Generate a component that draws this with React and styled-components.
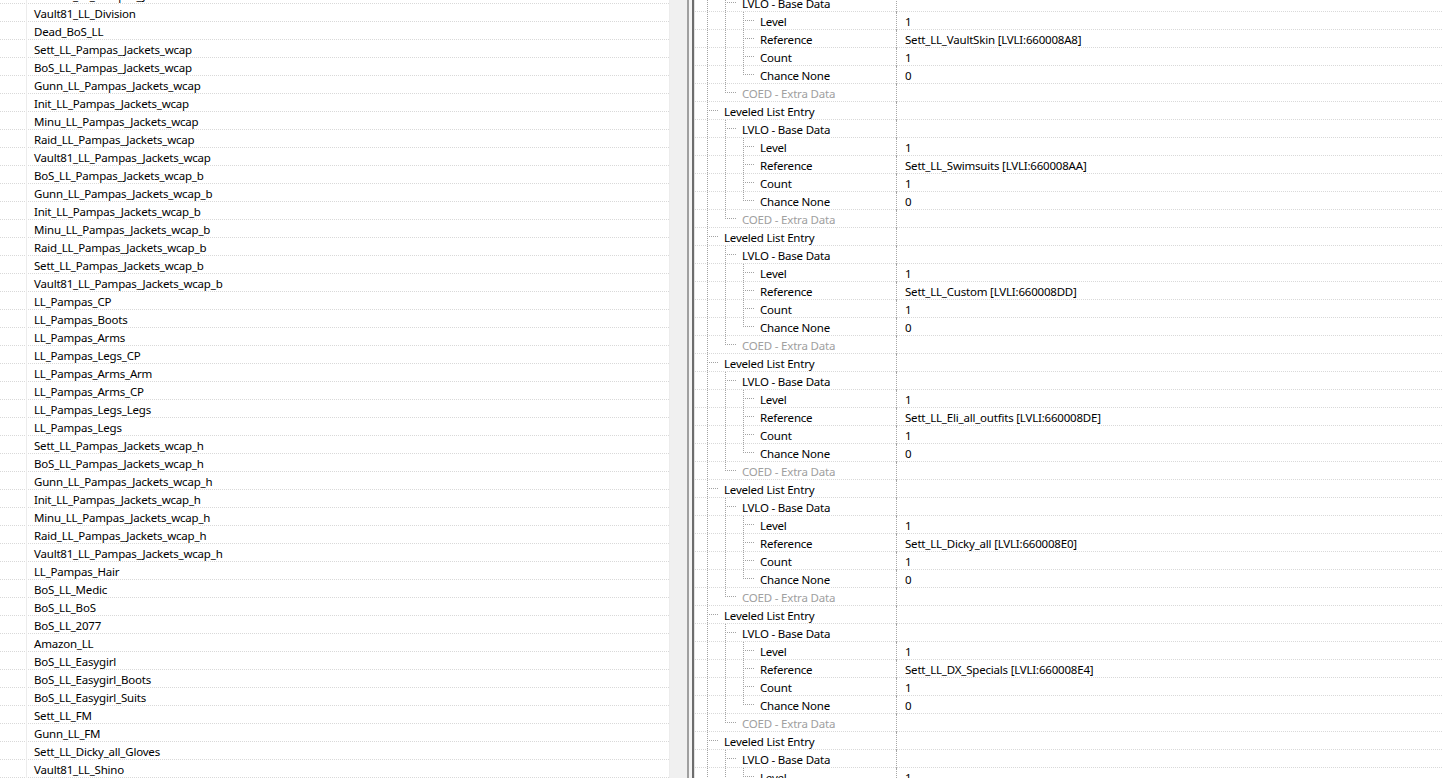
import React from "react";
import styled, { createGlobalStyle } from "styled-components";

const GlobalStyle = createGlobalStyle`
  html, body {
    margin: 0;
    padding: 0;
    background: #ffffff;
  }
  body {
    font-family: "Noto Sans", "Open Sans", sans-serif;
    font-size: 11.5px;
    letter-spacing: -0.2px;
    color: #000;
  }
`;

const Window = styled.div`
  display: flex;
  width: 100vw;
  height: 100vh;
  overflow: hidden;
  background: #fff;
`;

const ListPane = styled.div`
  width: 669px;
  flex: none;
  overflow: hidden;
  background: #fff;
  border-right: 1px solid #ececec;
`;

const ListBody = styled.div`
  margin-top: -14px;
`;

const Gutter = styled.div`
  width: 17px;
  flex: none;
  background: #f0f0f0;
`;

const Splitter = styled.div`
  width: 8px;
  flex: none;
  display: flex;
  background: #f0f0f0;
`;

const SplitLine = styled.div`
  width: ${(p) => p.$w}px;
  background: ${(p) => p.$color};
`;

const TreePane = styled.div`
  flex: 1;
  overflow: hidden;
  background: #fff;
`;

const TreeBody = styled.div`
  margin-top: -24px;
`;

const gridLine = `
  background-image: linear-gradient(to right, #d9d9d9 50%, transparent 50%);
  background-size: 2px 1px;
  background-repeat: repeat-x;
  background-position: left bottom;
`;

const ListRow = styled.div`
  display: flex;
  height: 18px;
  box-sizing: border-box;
  ${gridLine}
`;

const MarkCell = styled.div`
  width: 26px;
  flex: none;
  border-right: 1px solid #ececec;
`;

const NameCell = styled.div`
  padding: 1px 0 0 7px;
  line-height: 17px;
  white-space: nowrap;
`;

const TreeRow = styled.div`
  display: flex;
  height: 18px;
  box-sizing: border-box;
  ${gridLine}
`;

const TreeCell = styled.div`
  width: 202px;
  flex: none;
  display: flex;
  padding-left: 3px;
  box-sizing: border-box;
  border-right: 1px dotted #a6a6a6;
  overflow: hidden;
`;

const dots = "#a3a3a3";

const Guide = styled.div`
  width: 18px;
  height: 18px;
  flex: none;
  position: relative;

  &::before {
    content: "";
    display: ${(p) => (p.$line === "none" ? "none" : "block")};
    position: absolute;
    left: 9px;
    top: 0;
    width: 1px;
    height: ${(p) => (p.$line === "top" ? "9px" : "18px")};
    background-image: linear-gradient(to bottom, ${dots} 50%, transparent 50%);
    background-size: 1px 2px;
  }

  &::after {
    content: "";
    display: ${(p) => (p.$branch ? "block" : "none")};
    position: absolute;
    left: 11px;
    top: 8px;
    width: 9px;
    height: 1px;
    background-image: linear-gradient(to right, ${dots} 50%, transparent 50%);
    background-size: 2px 1px;
  }
`;

const Label = styled.div`
  padding: 1px 0 0 8px;
  line-height: 17px;
  white-space: nowrap;
  color: ${(p) => (p.$muted ? "#a0a0a0" : "#000")};
`;

const ValueCell = styled.div`
  padding: 1px 0 0 8px;
  line-height: 17px;
  white-space: nowrap;
`;

const names = [
  "Vault81_LL_Pampas_Jeans",
  "Vault81_LL_Division",
  "Dead_BoS_LL",
  "Sett_LL_Pampas_Jackets_wcap",
  "BoS_LL_Pampas_Jackets_wcap",
  "Gunn_LL_Pampas_Jackets_wcap",
  "Init_LL_Pampas_Jackets_wcap",
  "Minu_LL_Pampas_Jackets_wcap",
  "Raid_LL_Pampas_Jackets_wcap",
  "Vault81_LL_Pampas_Jackets_wcap",
  "BoS_LL_Pampas_Jackets_wcap_b",
  "Gunn_LL_Pampas_Jackets_wcap_b",
  "Init_LL_Pampas_Jackets_wcap_b",
  "Minu_LL_Pampas_Jackets_wcap_b",
  "Raid_LL_Pampas_Jackets_wcap_b",
  "Sett_LL_Pampas_Jackets_wcap_b",
  "Vault81_LL_Pampas_Jackets_wcap_b",
  "LL_Pampas_CP",
  "LL_Pampas_Boots",
  "LL_Pampas_Arms",
  "LL_Pampas_Legs_CP",
  "LL_Pampas_Arms_Arm",
  "LL_Pampas_Arms_CP",
  "LL_Pampas_Legs_Legs",
  "LL_Pampas_Legs",
  "Sett_LL_Pampas_Jackets_wcap_h",
  "BoS_LL_Pampas_Jackets_wcap_h",
  "Gunn_LL_Pampas_Jackets_wcap_h",
  "Init_LL_Pampas_Jackets_wcap_h",
  "Minu_LL_Pampas_Jackets_wcap_h",
  "Raid_LL_Pampas_Jackets_wcap_h",
  "Vault81_LL_Pampas_Jackets_wcap_h",
  "LL_Pampas_Hair",
  "BoS_LL_Medic",
  "BoS_LL_BoS",
  "BoS_LL_2077",
  "Amazon_LL",
  "BoS_LL_Easygirl",
  "BoS_LL_Easygirl_Boots",
  "BoS_LL_Easygirl_Suits",
  "Sett_LL_FM",
  "Gunn_LL_FM",
  "Sett_LL_Dicky_all_Gloves",
  "Vault81_LL_Shino",
  "Sett_LL_Shino",
];

const references = [
  "Sett_LL_VaultSkin [LVLI:660008A8]",
  "Sett_LL_Swimsuits [LVLI:660008AA]",
  "Sett_LL_Custom [LVLI:660008DD]",
  "Sett_LL_Eli_all_outfits [LVLI:660008DE]",
  "Sett_LL_Dicky_all [LVLI:660008E0]",
  "Sett_LL_DX_Specials [LVLI:660008E4]",
  "Sett_LL_Shino [LVLI:660008E6]",
];

// each row: guides for the ancestors, then the connector for the node itself
function entryRows(ref) {
  return [
    { label: "Leveled List Entry", guides: [], conn: "full" },
    { label: "LVLO - Base Data", guides: ["full"], conn: "full" },
    { label: "Level", value: "1", guides: ["full", "full"], conn: "full" },
    { label: "Reference", value: ref, guides: ["full", "full"], conn: "full" },
    { label: "Count", value: "1", guides: ["full", "full"], conn: "full" },
    { label: "Chance None", value: "0", guides: ["full", "full"], conn: "top" },
    { label: "COED - Extra Data", guides: ["full"], conn: "top", muted: true },
  ];
}

const treeRows = references.flatMap(entryRows);

function TreeNode({ row }) {
  return (
    <TreeRow>
      <TreeCell>
        {row.guides.map((g, i) => (
          <Guide key={i} $line={g} />
        ))}
        <Guide $line={row.conn} $branch />
        <Label $muted={row.muted}>{row.label}</Label>
      </TreeCell>
      <ValueCell>{row.value}</ValueCell>
    </TreeRow>
  );
}

export default function App() {
  return (
    <>
      <GlobalStyle />
      <Window>
        <ListPane>
          <ListBody>
            {names.map((n, i) => (
              <ListRow key={i}>
                <MarkCell />
                <NameCell>{n}</NameCell>
              </ListRow>
            ))}
          </ListBody>
        </ListPane>
        <Gutter />
        <Splitter>
          <SplitLine $w={2} $color="#a0a0a0" />
          <SplitLine $w={3} $color="#f4f4f4" />
          <SplitLine $w={2} $color="#6d6d6d" />
          <SplitLine $w={1} $color="#e3e3e3" />
        </Splitter>
        <TreePane>
          <TreeBody>
            {treeRows.map((r, i) => (
              <TreeNode key={i} row={r} />
            ))}
          </TreeBody>
        </TreePane>
      </Window>
    </>
  );
}
